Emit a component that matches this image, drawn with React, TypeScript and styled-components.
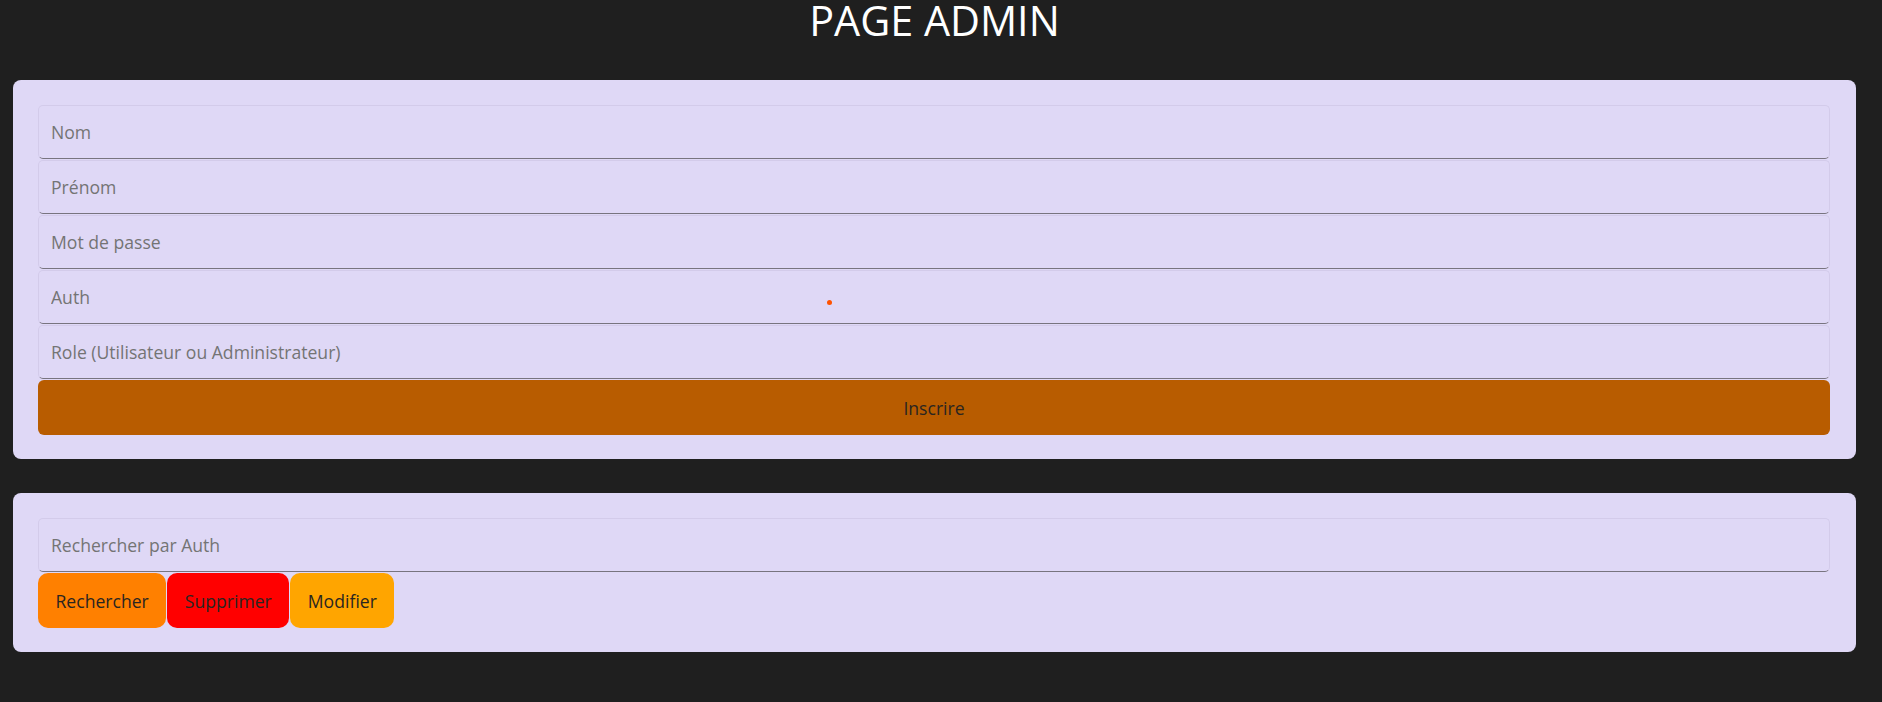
import React from "react";
import styled, { createGlobalStyle } from "styled-components";

const GlobalStyle = createGlobalStyle`
  html, body {
    margin: 0;
    padding: 0;
    background: #1f1f1f;
    font-family: "Open Sans", "Noto Sans", sans-serif;
  }
`;

const Page = styled.div`
  position: relative;
  padding: 0 26px 40px 13px;
`;

const Title = styled.h1`
  margin: 0;
  height: 40px;
  line-height: 40px;
  font-size: 41.3px;
  font-weight: 400;
  color: #ffffff;
  text-align: center;
`;

const Card = styled.section<{ $top: number }>`
  margin-top: ${(p) => p.$top}px;
  background: #dfd8f6;
  border-radius: 8px;
  padding: 25px 26px 24px 25px;
  display: flex;
  flex-direction: column;
  gap: 1px;
`;

const Field = styled.input`
  box-sizing: border-box;
  height: 54px;
  width: 100%;
  margin: 0;
  padding: 0 12px;
  background: transparent;
  border: 1px solid #d3cbea;
  border-bottom: 1px solid #78747f;
  border-radius: 5px;
  font-family: "Open Sans", "Noto Sans", sans-serif;
  font-size: 17.6px;
  color: #333;
  outline: none;
  &::placeholder {
    color: #747474;
  }
`;

const WideButton = styled.button`
  box-sizing: border-box;
  height: 55px;
  width: 100%;
  border: none;
  border-radius: 6px;
  background: #b85c00;
  color: #2a2520;
  font-family: "Open Sans", "Noto Sans", sans-serif;
  font-size: 17.6px;
  cursor: pointer;
`;

const ActionRow = styled.div`
  display: flex;
  gap: 1px;
`;

const ActionButton = styled.button<{ $bg: string }>`
  box-sizing: border-box;
  height: 55px;
  padding: 0 17.5px;
  border: none;
  border-radius: 10px;
  background: ${(p) => p.$bg};
  color: #2a2520;
  font-family: "Open Sans", "Noto Sans", sans-serif;
  font-size: 17.6px;
  cursor: pointer;
`;

const Dot = styled.span`
  position: absolute;
  left: 827px;
  top: 300px;
  width: 5px;
  height: 5px;
  border-radius: 50%;
  background: #ff5200;
`;

const fields = [
  "Nom",
  "Prénom",
  "Mot de passe",
  "Auth",
  "Role (Utilisateur ou Administrateur)",
];

export default function App() {
  return (
    <>
      <GlobalStyle />
      <Page>
        <Title>PAGE ADMIN</Title>
        <Card $top={40}>
          {fields.map((f) => (
            <Field key={f} placeholder={f} type={f === "Mot de passe" ? "password" : "text"} />
          ))}
          <WideButton>Inscrire</WideButton>
        </Card>
        <Card $top={34}>
          <Field placeholder="Rechercher par Auth" />
          <ActionRow>
            <ActionButton $bg="#ff8000">Rechercher</ActionButton>
            <ActionButton $bg="#ff0000">Supprimer</ActionButton>
            <ActionButton $bg="#ffa500">Modifier</ActionButton>
          </ActionRow>
        </Card>
        <Dot />
      </Page>
    </>
  );
}
